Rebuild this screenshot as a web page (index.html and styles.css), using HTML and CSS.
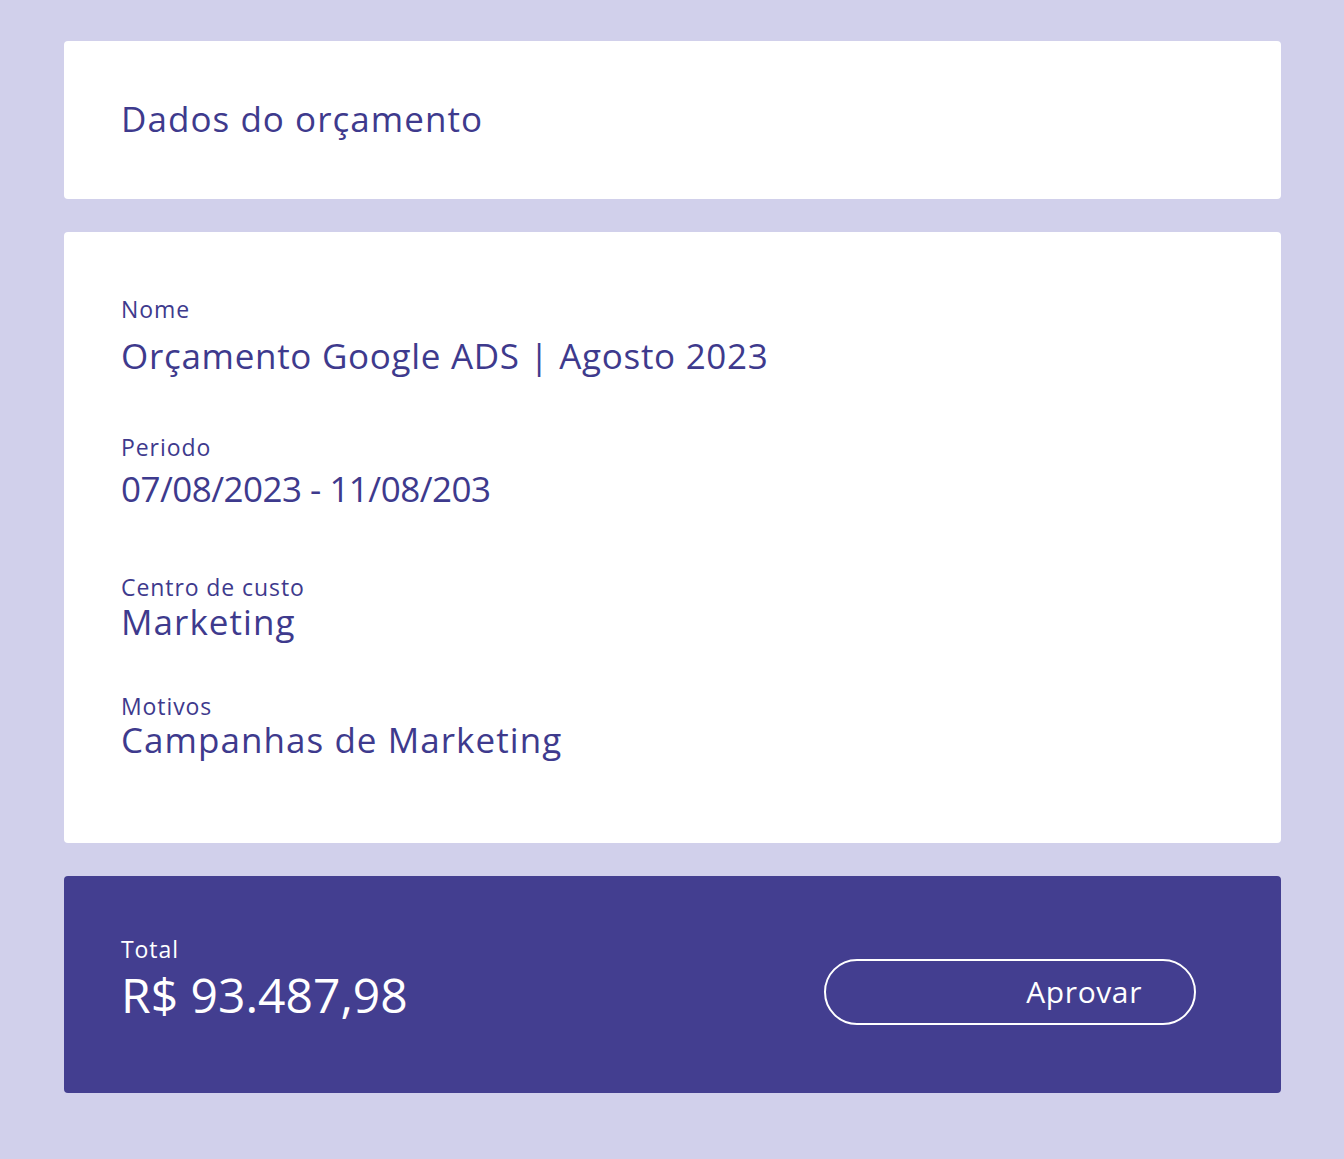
FILE: index.html
```html
<!DOCTYPE html>
<html lang="pt-BR">
<head>
<meta charset="utf-8">
<title>Dados do orçamento</title>
<link rel="stylesheet" href="styles.css">
</head>
<body>
<main class="page">
  <section class="card card--header">
    <h1 class="title">Dados do orçamento</h1>
  </section>

  <section class="card card--details">
    <div class="field field--name">
      <div class="label">Nome</div>
      <div class="value value--name">Orçamento Google ADS | Agosto 2023</div>
    </div>
    <div class="field field--period">
      <div class="label">Periodo</div>
      <div class="value value--date">07/08/2023 - 11/08/203</div>
    </div>
    <div class="field field--cost">
      <div class="label">Centro de custo</div>
      <div class="value">Marketing</div>
    </div>
    <div class="field field--reason">
      <div class="label">Motivos</div>
      <div class="value">Campanhas de Marketing</div>
    </div>
  </section>

  <section class="card card--total">
    <div class="total">
      <div class="label label--light">Total</div>
      <div class="total-value">R$ 93.487,98</div>
    </div>
    <button class="approve" type="button">Aprovar</button>
  </section>
</main>
</body>
</html>
```

FILE: styles.css
```css
* {
  box-sizing: border-box;
}

html, body {
  margin: 0;
  padding: 0;
}

body {
  background: #d1d0eb;
  font-family: "Open Sans", "Noto Sans", sans-serif;
  color: #3e3a8d;
  min-height: 1159px;
}

.page {
  padding: 41px 63px 0 64px;
  display: flex;
  flex-direction: column;
  gap: 33px;
}

.card {
  background: #ffffff;
  border-radius: 4px;
}

.card--header {
  height: 158px;
  display: flex;
  align-items: center;
  padding-left: 57px;
}

.title {
  margin: 0;
  font-weight: 400;
  font-size: 35px;
  line-height: 40px;
  letter-spacing: 0.03em;
  position: relative;
  top: -1px;
}

.card--details {
  height: 611px;
  padding: 65px 57px 0 57px;
}

.label {
  font-size: 23px;
  line-height: 24px;
  letter-spacing: 0.04em;
}

.value {
  font-size: 35px;
  line-height: 40px;
  letter-spacing: 0.03em;
}

.value--name {
  letter-spacing: 0.02em;
}

.value--date {
  letter-spacing: -0.015em;
}

.field--name .value {
  margin-top: 15px;
}

.field--period {
  margin-top: 59px;
}

.field--period .value {
  margin-top: 10px;
}

.field--cost {
  margin-top: 66px;
}

.field--cost .value {
  margin-top: 3px;
}

.field--reason {
  margin-top: 52px;
}

.field--reason .value {
  margin-top: 2px;
}

.card--total {
  background: #433e90;
  height: 217px;
  padding: 61px 85px 0 57px;
  display: flex;
  justify-content: space-between;
  align-items: flex-start;
  color: #ffffff;
}

.label--light {
  color: #ffffff;
}

.total-value {
  margin-top: 6px;
  font-size: 48px;
  line-height: 56px;
  letter-spacing: 0;
}

.approve {
  margin-top: 22px;
  width: 372px;
  height: 66px;
  border: 2px solid #ffffff;
  border-radius: 33px;
  background: transparent;
  color: #ffffff;
  font-family: "Open Sans", "Noto Sans", sans-serif;
  font-size: 30px;
  line-height: 62px;
  letter-spacing: 0.02em;
  text-align: right;
  padding: 0 52px 0 0;
  cursor: pointer;
}
```
